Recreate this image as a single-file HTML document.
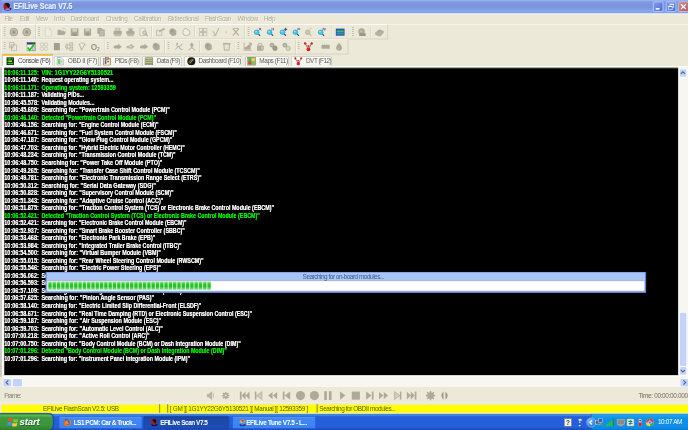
<!DOCTYPE html><html><head><meta charset='utf-8'><title>EFILive Scan V7.5</title><style>
html,body{margin:0;padding:0;background:#ece9d8;overflow:hidden}
body{width:688px;height:430px;position:relative}
#r{filter:blur(0.01px);position:absolute;left:0;top:0;width:1280px;height:800px;transform:scale(0.5375);transform-origin:0 0;background:#ece9d8;font:11px 'Liberation Sans',sans-serif;overflow:hidden;color:#000}
#r div,#r span,#r svg{position:absolute;box-sizing:border-box;white-space:pre}
.t{line-height:14px;height:14px}
#con .l{height:14px;line-height:14px;font:bold 12px 'Liberation Sans',sans-serif;color:#fff;-webkit-text-stroke:0.1px #fff;text-shadow:0 0 1.2px rgba(255,255,255,.7)}
#con .g{color:#00f400;-webkit-text-stroke:0.1px #00f400;text-shadow:0 0 1.2px rgba(0,255,0,.7)}
.mi{top:27.5px;height:14px;line-height:14px;color:#afac9c;font-size:12px;text-shadow:1px 1px 0 #fbfaf4}
.band{border-top:1px solid #fff;border-left:1px solid #fff;border-right:1px solid #c5c2b2;border-bottom:1px solid #c5c2b2}
.grip{width:3px;border-left:2px dotted #b0ad9c;}
.sep{width:2px;border-left:1px solid #c5c2b2;border-right:1px solid #fff}
.tab{top:105px;height:19px;background:linear-gradient(#fdfdfb,#f2f1ea);border:1px solid #919b9c;border-bottom:none;border-radius:3px 3px 0 0}
.tabt{top:106.5px;height:14px;line-height:14px;color:#5e5d58;font-size:12px}
</style></head><body><div id='r'>
<div style="left:0;top:0;width:1280px;height:24.5px;background:linear-gradient(#a3bdf0 0,#86a3e8 2px,#7a96df 6px,#7a96df 14px,#86a8ef 21px,#7d9ce6 24.5px)"></div>
<div style="left:0;top:0;width:3px;height:24.5px;background:#8890e8"></div>
<div style="left:25px;top:3px;height:18px;line-height:18px;font:bold 16px 'Liberation Sans',sans-serif;color:#eef3fc;text-shadow:1px 1px 0 #5f7cc8;-webkit-text-stroke:0.3px #eef3fc;transform:scaleX(0.7995);transform-origin:0 0">EFILive Scan V7.5</div>
<svg style="left:5px;top:4px" width="18" height="18" viewBox="0 0 18 18"><path d="M2 12 Q4 17 9 16 Q14 17 17 12 L14 11 L9 13 L4 11Z" fill="#1c1c8c"/><circle cx="7.5" cy="7" r="6" fill="#b01818"/><path d="M4 3 Q9 0 13 4 Q15 8 11 11 Q8 8 4 3Z" fill="#141420"/><path d="M6 12 L12 12 L14 15 L4 15Z" fill="#e8e8f4" opacity=".55"/></svg>
<div style="left:1215px;top:3px;width:19px;height:19px;border-radius:3px;background:linear-gradient(135deg,#7f9cf0,#4c6fd9);border:1px solid #dfe6fb"></div>
<div style="left:1220px;top:15px;width:7px;height:3px;background:#fff"></div>
<div style="left:1239px;top:3px;width:19px;height:19px;border-radius:3px;background:linear-gradient(135deg,#7f9cf0,#4c6fd9);border:1px solid #dfe6fb"></div>
<div style="left:1246px;top:7px;width:8px;height:7px;border:1px solid #fff;border-top-width:2px"></div>
<div style="left:1243px;top:11px;width:8px;height:7px;border:1px solid #fff;border-top-width:2px;background:#5c7de0"></div>
<div style="left:1262px;top:3px;width:19px;height:19px;border-radius:3px;background:linear-gradient(135deg,#d08c8c,#b5565a);border:1px solid #ecd6da"></div>
<svg style="left:1262px;top:3px" width="19" height="19"><path d="M5 5 L14 14 M14 5 L5 14" stroke="#fff" stroke-width="2.4"/></svg>
<div style="left:0;top:24.5px;width:1280px;height:2.5px;background:#f6f4ea"></div>
<div class="mi" style="left:8.4px;letter-spacing:-1.111px">File</div>
<div class="mi" style="left:37.2px;letter-spacing:-1.122px">Edit</div>
<div class="mi" style="left:66.4px;letter-spacing:-0.949px">View</div>
<div class="mi" style="left:100.5px;letter-spacing:0.121px">Info</div>
<div class="mi" style="left:131.5px;letter-spacing:-0.669px">Dashboard</div>
<div class="mi" style="left:196.7px;letter-spacing:-0.607px">Charting</div>
<div class="mi" style="left:249.3px;letter-spacing:-0.652px">Calibration</div>
<div class="mi" style="left:312.6px;letter-spacing:-0.637px">Bidirectional</div>
<div class="mi" style="left:381.4px;letter-spacing:-0.989px">FlashScan</div>
<div class="mi" style="left:441.9px;letter-spacing:-0.865px">Window</div>
<div class="mi" style="left:490.6px;letter-spacing:-0.822px">Help</div>
<div style="left:0;top:45px;width:1280px;height:1px;background:#fff"></div>
<div class="band" style="left:2.4px;top:45px;width:64.9px;height:28px"></div>
<div class="band" style="left:67.3px;top:45px;width:388.5px;height:28px"></div>
<div class="band" style="left:455.8px;top:45px;width:194.2px;height:28px"></div>
<div class="band" style="left:650.0px;top:45px;width:72.4px;height:28px"></div>
<div class="band" style="left:2.4px;top:73px;width:193.9px;height:28px"></div>
<div class="band" style="left:196.3px;top:73px;width:111.1px;height:28px"></div>
<div class="band" style="left:307.3px;top:73px;width:130.8px;height:28px"></div>
<div class="band" style="left:438.1px;top:73px;width:112.6px;height:28px"></div>
<div class="band" style="left:550.7px;top:73px;width:97.1px;height:28px"></div>
<div style="left:6.5px;top:50px;width:3px;height:17px;background:repeating-linear-gradient(#bfbcab 0,#bfbcab 2px,transparent 2px,transparent 4px)"></div>
<div style="left:70.7px;top:50px;width:3px;height:17px;background:repeating-linear-gradient(#bfbcab 0,#bfbcab 2px,transparent 2px,transparent 4px)"></div>
<div style="left:461.4px;top:50px;width:3px;height:17px;background:repeating-linear-gradient(#bfbcab 0,#bfbcab 2px,transparent 2px,transparent 4px)"></div>
<div style="left:654.7px;top:50px;width:3px;height:17px;background:repeating-linear-gradient(#bfbcab 0,#bfbcab 2px,transparent 2px,transparent 4px)"></div>
<div style="left:6.5px;top:78px;width:3px;height:17px;background:repeating-linear-gradient(#bfbcab 0,#bfbcab 2px,transparent 2px,transparent 4px)"></div>
<div style="left:199.2px;top:78px;width:3px;height:17px;background:repeating-linear-gradient(#bfbcab 0,#bfbcab 2px,transparent 2px,transparent 4px)"></div>
<div style="left:312.2px;top:78px;width:3px;height:17px;background:repeating-linear-gradient(#bfbcab 0,#bfbcab 2px,transparent 2px,transparent 4px)"></div>
<div style="left:442.2px;top:78px;width:3px;height:17px;background:repeating-linear-gradient(#bfbcab 0,#bfbcab 2px,transparent 2px,transparent 4px)"></div>
<div style="left:554.2px;top:78px;width:3px;height:17px;background:repeating-linear-gradient(#bfbcab 0,#bfbcab 2px,transparent 2px,transparent 4px)"></div>
<div style="left:200.7px;top:48px;width:1px;height:21px;background:#c5c2b2"></div><div style="left:201.7px;top:48px;width:1px;height:21px;background:#fff"></div>
<div style="left:282.2px;top:48px;width:1px;height:21px;background:#c5c2b2"></div><div style="left:283.2px;top:48px;width:1px;height:21px;background:#fff"></div>
<div style="left:361.8px;top:48px;width:1px;height:21px;background:#c5c2b2"></div><div style="left:362.8px;top:48px;width:1px;height:21px;background:#fff"></div>
<div style="left:615.7px;top:48px;width:1px;height:21px;background:#c5c2b2"></div><div style="left:616.7px;top:48px;width:1px;height:21px;background:#fff"></div>
<div style="left:689.4px;top:48px;width:1px;height:21px;background:#c5c2b2"></div><div style="left:690.4px;top:48px;width:1px;height:21px;background:#fff"></div>
<div style="left:41.0px;top:76px;width:1px;height:21px;background:#c5c2b2"></div><div style="left:42.0px;top:76px;width:1px;height:21px;background:#fff"></div>
<div style="left:371.1px;top:76px;width:1px;height:21px;background:#c5c2b2"></div><div style="left:372.1px;top:76px;width:1px;height:21px;background:#fff"></div>
<div style="left:588.4px;top:76px;width:1px;height:21px;background:#c5c2b2"></div><div style="left:589.4px;top:76px;width:1px;height:21px;background:#fff"></div>
<svg style="left:16.5px;top:50.5px" width="17.6" height="17.6" viewBox="0 0 16 16"><circle cx="8" cy="8" r="7.3" fill="#adaa9a"/><circle cx="8" cy="8" r="4.6" fill="none" stroke="#d6d3c3" stroke-width="1"/><circle cx="8" cy="8" r="1.8" fill="#9a9787"/></svg>
<svg style="left:40.9px;top:50.5px" width="17.6" height="17.6" viewBox="0 0 16 16"><circle cx="8" cy="8" r="7.3" fill="#adaa9a"/><circle cx="8" cy="8" r="4.6" fill="none" stroke="#d6d3c3" stroke-width="1"/><circle cx="8" cy="8" r="1.8" fill="#9a9787"/></svg>
<svg style="left:81.4px;top:50.5px" width="17.6" height="17.6" viewBox="0 0 16 16"><path d="M3 1 H10 L13 4 V15 H3Z" fill="#f0eee2" stroke="#cbc8b8" stroke-width="1"/><path d="M10 1 V4 H13" fill="none" stroke="#cbc8b8"/></svg>
<svg style="left:105.6px;top:50.5px" width="17.6" height="17.6" viewBox="0 0 16 16"><path d="M1 13 V4 H6 L7 5.5 H12 V7 H15.5 L12.5 13Z" fill="#adaa9a"/><path d="M9 3 Q12 0 14 3" stroke="#adaa9a" fill="none"/></svg>
<svg style="left:129.6px;top:50.5px" width="17.6" height="17.6" viewBox="0 0 16 16"><rect x="1.5" y="1.5" width="13" height="13" fill="#adaa9a"/><rect x="4" y="2" width="8" height="5" fill="#d6d3c3"/><rect x="5" y="10" width="6" height="4.5" fill="#9c9989"/></svg>
<svg style="left:153.6px;top:50.5px" width="17.6" height="17.6" viewBox="0 0 16 16"><rect x="2" y="2" width="12" height="12" fill="#adaa9a"/><rect x="4.5" y="2.5" width="7" height="4" fill="#d6d3c3"/><rect x="5.5" y="9.5" width="5" height="4" fill="#9c9989"/></svg>
<svg style="left:178.7px;top:50.5px" width="17.6" height="17.6" viewBox="0 0 16 16"><rect x="2" y="1" width="8" height="10" fill="#adaa9a"/><rect x="5.5" y="4" width="8.5" height="11" fill="#b4b1a0" stroke="#adaa9a"/><path d="M7 7H12M7 9.5H12M7 12H12" stroke="#d6d3c3"/></svg>
<svg style="left:210.0px;top:50.5px" width="17.6" height="17.6" viewBox="0 0 16 16"><path d="M4 1 H12 V6 H4Z" fill="#d6d3c3" stroke="#adaa9a"/><rect x="1" y="6" width="14" height="6" rx="1" fill="#adaa9a"/><rect x="3.5" y="11" width="9" height="3.5" fill="#c5c2b2" stroke="#adaa9a"/></svg>
<svg style="left:233.8px;top:50.5px" width="17.6" height="17.6" viewBox="0 0 16 16"><path d="M5 1.5 H11 V6 H5Z" fill="#d6d3c3" stroke="#adaa9a"/><rect x="1" y="6" width="14" height="6" rx="2" fill="#adaa9a"/><circle cx="8" cy="5" r="2.5" fill="#adaa9a"/><rect x="3.5" y="11" width="9" height="3.5" fill="#c5c2b2" stroke="#adaa9a"/></svg>
<svg style="left:258.2px;top:50.5px" width="17.6" height="17.6" viewBox="0 0 16 16"><path d="M2 1 H11 V14 H2Z" fill="#eeecdf" stroke="#b0ad9c"/><circle cx="10" cy="9" r="3" fill="#d6d3c3" stroke="#adaa9a" stroke-width="1.6"/><path d="M12 11 L15 14.5" stroke="#adaa9a" stroke-width="2.2"/></svg>
<svg style="left:289.2px;top:50.5px" width="17.6" height="17.6" viewBox="0 0 16 16"><path d="M2 5 H11 V14 H2Z" fill="#e6e3d4" stroke="#adaa9a"/><path d="M6 6 L13 2 L12 0.5 L16 2 L14.5 6 L13.8 4 L7 8Z" fill="#adaa9a"/></svg>
<svg style="left:313.1px;top:50.5px" width="17.6" height="17.6" viewBox="0 0 16 16"><path d="M3 3 Q7 0 11 3 Q15 5 13.5 9 Q15 14 10 13.5 Q6 16 4 12 Q0 9 3 3Z" fill="#adaa9a"/><circle cx="6.5" cy="6" r="1.8" fill="#999686"/></svg>
<svg style="left:338.2px;top:50.5px" width="17.6" height="17.6" viewBox="0 0 16 16"><path d="M5 2 Q8 0 9 3 Q14 4 14 9 Q14 14 8 14 Q2 14 2 9 Q2 5 5 2Z" fill="#efede1" stroke="#aeab9a" stroke-width="1.3"/></svg>
<svg style="left:369.2px;top:50.5px" width="17.6" height="17.6" viewBox="0 0 16 16"><rect x="1.5" y="1.5" width="5.5" height="5.5" fill="none" stroke="#b3b09f"/><rect x="9" y="1.5" width="5.5" height="5.5" fill="none" stroke="#b3b09f"/><rect x="1.5" y="9" width="5.5" height="5.5" fill="none" stroke="#b3b09f"/><rect x="9" y="9" width="5.5" height="5.5" fill="none" stroke="#b3b09f"/><path d="M8 2V14M3 8H13" stroke="#adaa9a"/></svg>
<svg style="left:393.4px;top:50.5px" width="17.6" height="17.6" viewBox="0 0 16 16"><path d="M3 6 L7 14 L13 1" fill="none" stroke="#adaa9a" stroke-width="1.6"/><path d="M2 14 H9" stroke="#bcb9a8"/></svg>
<svg style="left:411.7px;top:50.5px" width="17.6" height="17.6" viewBox="0 0 16 16"><rect x="7" y="7" width="2" height="2" fill="#b5b2a1"/></svg>
<svg style="left:430.3px;top:50.5px" width="17.6" height="17.6" viewBox="0 0 16 16"><path d="M3 2 L13 14 M13 2 L3 14" stroke="#adaa9a" stroke-width="1.7" fill="none"/><path d="M4 1.5 H12" stroke="#adaa9a" stroke-width="1.4"/></svg>
<svg style="left:624.1px;top:50.5px" width="17.6" height="17.6" viewBox="0 0 16 16"><rect x="0.5" y="2" width="15" height="12" fill="#2a50b8"/><rect x="2" y="5" width="12" height="3" fill="#38b86a"/><rect x="2" y="8.5" width="12" height="3.5" fill="#2f9a9a"/></svg>
<svg style="left:664.5px;top:50.5px" width="17.6" height="17.6" viewBox="0 0 16 16"><circle cx="7" cy="7" r="5.5" fill="#adaa9a"/><rect x="3" y="10" width="11" height="4.5" rx="1" fill="#98958a"/><circle cx="6.5" cy="6.5" r="2.2" fill="#bdbaa9"/></svg>
<svg style="left:697.2px;top:50.5px" width="17.6" height="17.6" viewBox="0 0 16 16"><path d="M1 9 L8 3 L15 6 L9 13Z" fill="#adaa9a"/><path d="M1 9 L1.5 12 L9.5 15.5 L15 8.5 L15 6" fill="#b6b3a3" stroke="#adaa9a"/></svg>
<svg style="left:470.5px;top:51.3px" width="16" height="16" viewBox="0 0 16 16"><circle cx="6.5" cy="9" r="4.4" fill="#2fd0ee" stroke="#2f86c4" stroke-width="1"/><path d="M10 12.5 L13 15.5" stroke="#2a4488" stroke-width="2.2"/><circle cx="5.5" cy="8" r="1.5" fill="#b8f2fb"/><path d="M10.5 1 L15 5.5 M15 1 L10.5 5.5" stroke="#3a3a7a" stroke-width="1.3"/></svg>
<svg style="left:494.7px;top:51.3px" width="16" height="16" viewBox="0 0 16 16"><circle cx="6.5" cy="9" r="4.4" fill="#2fd0ee" stroke="#2f86c4" stroke-width="1"/><path d="M10 12.5 L13 15.5" stroke="#2a4488" stroke-width="2.2"/><circle cx="5.5" cy="8" r="1.5" fill="#b8f2fb"/><path d="M11 1 V5.5 M14 1 V5.5" stroke="#3a3a7a" stroke-width="1.2"/></svg>
<svg style="left:518.7px;top:51.3px" width="16" height="16" viewBox="0 0 16 16"><circle cx="6.5" cy="9" r="4.4" fill="#2fd0ee" stroke="#2f86c4" stroke-width="1"/><path d="M10 12.5 L13 15.5" stroke="#2a4488" stroke-width="2.2"/><circle cx="5.5" cy="8" r="1.5" fill="#b8f2fb"/><path d="M12.5 0.5 V6.5 M9.5 3.5 H15.5" stroke="#3a3a7a" stroke-width="1.8"/></svg>
<svg style="left:543.1px;top:51.3px" width="16" height="16" viewBox="0 0 16 16"><circle cx="6.5" cy="9" r="4.4" fill="#2fd0ee" stroke="#2f86c4" stroke-width="1"/><path d="M10 12.5 L13 15.5" stroke="#2a4488" stroke-width="2.2"/><circle cx="5.5" cy="8" r="1.5" fill="#b8f2fb"/><path d="M10 3 H16" stroke="#3a3a7a" stroke-width="2"/></svg>
<svg style="left:566.0px;top:51.3px" width="16" height="16" viewBox="0 0 16 16"><circle cx="6.5" cy="9" r="4.4" fill="#c9c6b6" stroke="#aaa796" stroke-width="1"/><path d="M10 12.5 L13 15.5" stroke="#b3b09f" stroke-width="2.2"/><path d="M11 1 H15 M11 1 V5" stroke="#b5b2a1" stroke-width="1"/></svg>
<svg style="left:589.8px;top:51.3px" width="16" height="16" viewBox="0 0 16 16"><circle cx="6.5" cy="9" r="4.4" fill="#2fd0ee" stroke="#2f86c4" stroke-width="1"/><path d="M10 12.5 L13 15.5" stroke="#2a4488" stroke-width="2.2"/><circle cx="5.5" cy="8" r="1.5" fill="#b8f2fb"/><path d="M10 5.5 L11.5 1 L13 5.5 M14 1 V5.5 M15.5 1 V5.5" stroke="#3a3a7a" stroke-width="0.9" fill="none"/></svg>
<svg style="left:14.5px;top:78.2px" width="17.6" height="17.6" viewBox="0 0 16 16"><rect x="2" y="1" width="8" height="9" fill="#e9e6d7" stroke="#adaa9a"/><rect x="6" y="5" width="8" height="10" fill="#e9e6d7" stroke="#adaa9a"/><path d="M4 6 L7 11 L11 3" stroke="#adaa9a" stroke-width="1.4" fill="none"/></svg>
<svg style="left:49.4px;top:78.2px" width="17.6" height="17.6" viewBox="0 0 16 16"><rect x="1" y="1" width="14" height="14" fill="#f4f4f4" stroke="#7a7a8a"/><rect x="1" y="1" width="14" height="3.4" fill="#3c3c5c"/><rect x="10.5" y="7" width="4" height="7.5" fill="#d0d0d0" stroke="#8a8a9a" stroke-width=".8"/><path d="M2.5 9.5 L5.5 14 L13.5 3.5" stroke="#18c818" stroke-width="3" fill="none"/></svg>
<svg style="left:72.7px;top:78.2px" width="17.6" height="17.6" viewBox="0 0 16 16"><circle cx="4.5" cy="4.5" r="3" fill="none" stroke="#c9c6b6" stroke-width="1.3"/><circle cx="11.5" cy="4.5" r="3" fill="none" stroke="#c9c6b6" stroke-width="1.3"/><circle cx="4.5" cy="11.5" r="3" fill="none" stroke="#c9c6b6" stroke-width="1.3"/><circle cx="11.5" cy="11.5" r="3" fill="none" stroke="#c9c6b6" stroke-width="1.3"/></svg>
<svg style="left:97.1px;top:78.2px" width="17.6" height="17.6" viewBox="0 0 16 16"><rect x="3" y="2" width="10" height="12" fill="#9a9788"/><path d="M3 5.5H13M3 9H13M3 12H13" stroke="#b5b2a2"/></svg>
<svg style="left:120.3px;top:78.2px" width="17.6" height="17.6" viewBox="0 0 16 16"><path d="M4 2 V14 M4 5 H10 M4 11 H10" stroke="#adaa9a" fill="none"/><rect x="9" y="1.5" width="5" height="5.5" fill="#dad7c8" stroke="#adaa9a"/><rect x="9" y="9" width="5" height="5.5" fill="#dad7c8" stroke="#adaa9a"/><rect x="1.5" y="5" width="4" height="5" fill="#dad7c8" stroke="#b8b5a5"/></svg>
<svg style="left:143.6px;top:78.2px" width="17.6" height="17.6" viewBox="0 0 16 16"><path d="M3 3 L7 14 L13 3" fill="none" stroke="#adaa9a" stroke-width="1.5"/><path d="M5 2 L11 2 L14 6" fill="none" stroke="#b8b5a5" stroke-width="1.3"/></svg>
<svg style="left:169.2px;top:78.2px" width="17.6" height="17.6" viewBox="0 0 16 16"><text x="0" y="13" font-family="Liberation Sans" font-weight="bold" font-size="14" fill="#999686">O</text><text x="10.5" y="15.5" font-family="Liberation Sans" font-weight="bold" font-size="8" fill="#999686">2</text></svg>
<svg style="left:210.0px;top:78.2px" width="17.6" height="17.6" viewBox="0 0 16 16"><g transform="translate(16,0) scale(-1,1)"><path d="M1 8 L7 3 V5.5 H11 Q15 6 15 9 Q14 11.5 11 11 H7 V13Z" fill="#adaa9a"/></g></svg>
<svg style="left:233.8px;top:78.2px" width="17.6" height="17.6" viewBox="0 0 16 16"><g transform="translate(16,0) scale(-1,1)"><path d="M1 8 L7 3.5 L10 6 Q15 6 15 9 Q13 12 9 10.5 L7 12.5Z" fill="#b7b4a3"/><path d="M5 8 L8 6 L11 8 L8 10Z" fill="#d6d3c3"/></g></svg>
<svg style="left:258.7px;top:78.2px" width="17.6" height="17.6" viewBox="0 0 16 16"><g transform="translate(16,0) scale(-1,1)"><path d="M1 8 L7 3 V5.5 H11 Q15 6 15 9 Q14 11.5 11 11 H7 V13Z" fill="#adaa9a"/></g></svg>
<svg style="left:282.4px;top:78.2px" width="17.6" height="17.6" viewBox="0 0 16 16"><path d="M3 3 Q7 0 11 3 Q15 5 13.5 9 Q15 14 10 13.5 Q6 16 4 12 Q0 9 3 3Z" fill="#adaa9a"/><circle cx="6.5" cy="6" r="1.8" fill="#999686"/></svg>
<svg style="left:323.5px;top:78.2px" width="17.6" height="17.6" viewBox="0 0 16 16"><path d="M2 13 L6 8 L4 5 M6 8 L11 7 L14 3 M8 8 L10 12 L14 13" fill="none" stroke="#adaa9a" stroke-width="1.6"/><circle cx="5" cy="3" r="1.6" fill="#adaa9a"/></svg>
<svg style="left:347.7px;top:78.2px" width="17.6" height="17.6" viewBox="0 0 16 16"><path d="M8 1 L12 6 H9.5 V10 H6.5 V6 H4Z" fill="#adaa9a"/><path d="M2 14 L8 10 L14 14" fill="none" stroke="#adaa9a" stroke-width="1.5"/></svg>
<svg style="left:379.1px;top:78.2px" width="17.6" height="17.6" viewBox="0 0 16 16"><path d="M3 3 Q7 0 11 3 Q15 5 13.5 9 Q15 14 10 13.5 Q6 16 4 12 Q0 9 3 3Z" fill="#adaa9a"/><circle cx="6.5" cy="6" r="1.8" fill="#999686"/></svg>
<svg style="left:413.2px;top:78.2px" width="17.6" height="17.6" viewBox="0 0 16 16"><path d="M3 3 H13 L12 14 H4Z" fill="#e4e1d2" stroke="#adaa9a" stroke-width="1.4"/><path d="M1.5 3 H14.5" stroke="#adaa9a" stroke-width="1.8"/></svg>
<svg style="left:452.0px;top:78.2px" width="17.6" height="17.6" viewBox="0 0 16 16"><path d="M2 1 V14 H15" fill="none" stroke="#adaa9a" stroke-width="1.4"/><path d="M3 13 L3 9 Q7 8 9 5 L13 3 V13Z" fill="#adaa9a"/><path d="M10 2 H14 V6" fill="none" stroke="#8f8c7c" stroke-width="1.3"/></svg>
<svg style="left:475.3px;top:78.2px" width="17.6" height="17.6" viewBox="0 0 16 16"><rect x="3" y="6" width="10" height="9" fill="#adaa9a"/><path d="M5 6 V3.5 Q8 0.5 11 3.5 V6" fill="none" stroke="#adaa9a" stroke-width="1.5"/><rect x="9" y="8" width="5" height="5" fill="#c7c4b4" stroke="#adaa9a"/></svg>
<svg style="left:500.2px;top:78.2px" width="17.6" height="17.6" viewBox="0 0 16 16"><circle cx="5.5" cy="5.5" r="4" fill="#adaa9a"/><circle cx="10.5" cy="10.5" r="4.3" fill="#99968a"/><circle cx="5.5" cy="5.5" r="1.3" fill="#d6d3c3"/></svg>
<svg style="left:524.2px;top:78.2px" width="17.6" height="17.6" viewBox="0 0 16 16"><circle cx="5.5" cy="5.5" r="4" fill="#adaa9a"/><circle cx="11" cy="11" r="3.6" fill="#d8d5c6" stroke="#adaa9a" stroke-width="1.3"/><circle cx="5.5" cy="5.5" r="1.3" fill="#d6d3c3"/></svg>
<svg style="left:565.0px;top:78.2px" width="17.6" height="17.6" viewBox="0 0 16 16"><path d="M2.5 2.5 L8 13 L13.5 2.5" fill="none" stroke="#555" stroke-width="1.2"/><circle cx="2.5" cy="2.5" r="2" fill="#c02020"/><circle cx="13.5" cy="2.5" r="2" fill="#c02020"/><circle cx="8" cy="7" r="1.8" fill="#e03030"/><circle cx="8" cy="12.5" r="3.2" fill="#e81c1c"/></svg>
<svg style="left:597.0px;top:78.2px" width="17.6" height="17.6" viewBox="0 0 16 16"><rect x="1" y="5" width="14" height="6.5" rx="1" fill="#adaa9a"/><path d="M3 5V3M6 5V3M9 5V3M12 5V3" stroke="#b3b09f"/></svg>
<svg style="left:621.9px;top:78.2px" width="17.6" height="17.6" viewBox="0 0 16 16"><path d="M8 1.5 Q13.5 8 13 11 Q12 15 8 15 Q4 15 3 11 Q2.5 8 8 1.5Z" fill="#adaa9a"/><path d="M6 10 Q6 12.5 8 13" stroke="#d6d3c3" fill="none"/></svg>
<div style="left:3.7px;top:101px;width:95.3px;height:24px;background:#fdfdfb;border:1px solid #919b9c;border-bottom:none;border-radius:3px 3px 0 0"></div>
<div style="left:3.7px;top:100.5px;width:95.3px;height:3px;background:#ffc73c;border-top:1px solid #e68b2c;border-radius:3px 3px 0 0"></div>
<div class="tabt" style="left:33.5px;color:#45443f;letter-spacing:-0.788px">Console (F6)</div>
<div class="tab" style="left:100.1px;width:83.5px"></div>
<div class="tabt" style="left:126.0px;letter-spacing:-0.621px">OBD II (F7)</div>
<div class="tab" style="left:186.0px;width:74.6px"></div>
<div class="tabt" style="left:213.4px;letter-spacing:-0.806px">PIDs (F8)</div>
<div class="tab" style="left:264.4px;width:74.0px"></div>
<div class="tabt" style="left:291.7px;letter-spacing:-0.857px">Data (F9)</div>
<div class="tab" style="left:341.6px;width:109.8px"></div>
<div class="tabt" style="left:369.5px;letter-spacing:-0.801px">Dashboard (F10)</div>
<div class="tab" style="left:455.8px;width:81.9px"></div>
<div class="tabt" style="left:482.4px;letter-spacing:-0.763px">Maps (F11)</div>
<div class="tab" style="left:541.4px;width:77.0px"></div>
<div class="tabt" style="left:569.3px;letter-spacing:-0.990px">DVT (F12)</div>
<svg style="left:11.2px;top:105.5px" width="16" height="16" viewBox="0 0 16 16"><rect x="1.2" y="0.8" width="13.6" height="14.4" fill="#0a1c0a"/><rect x="3" y="2.5" width="7" height="2.6" fill="#20d020"/><rect x="11" y="2.5" width="2.4" height="2.6" fill="#189818"/><rect x="4.5" y="6.4" width="7" height="3" fill="#c8d820"/><rect x="2.6" y="6.4" width="1.6" height="3" fill="#20c020"/><rect x="3" y="10.8" width="10.4" height="2.8" fill="#20c820"/></svg>
<svg style="left:103.6px;top:105.5px" width="16" height="16" viewBox="0 0 16 16"><path d="M2.5 1 H10 L13.5 4.5 V15 H2.5Z" fill="#f6f6f2" stroke="#8a8a8a"/><rect x="4" y="4" width="4.5" height="9" fill="#58d868"/><path d="M9.5 6H12M9.5 8.5H12M9.5 11H12" stroke="#9a9a9a"/></svg>
<svg style="left:191.1px;top:105.5px" width="16" height="16" viewBox="0 0 16 16"><rect x="1" y="3" width="14" height="12.5" fill="#d6b67a" stroke="#9a7840"/><rect x="3" y="5" width="10" height="9" fill="#f4f0e0"/><rect x="5" y="0.8" width="6" height="4" fill="#b0a080" stroke="#706040" stroke-width=".8"/><rect x="4" y="6" width="3" height="7" fill="#4868c0"/><rect x="8.5" y="7" width="3" height="3" fill="#c84040"/></svg>
<svg style="left:269.4px;top:105.5px" width="16" height="16" viewBox="0 0 16 16"><rect x="0.5" y="1.5" width="15" height="13" fill="#c6c69a" stroke="#6a6a48"/><path d="M1 5H15M1 8.5H15M1 12H15" stroke="#7a7a56" stroke-width="1.3"/></svg>
<svg style="left:347.5px;top:105.5px" width="16" height="16" viewBox="0 0 16 16"><circle cx="8" cy="8" r="7.5" fill="#181818"/><path d="M3 10 Q8 2 13 6" stroke="#e03030" stroke-width="2" fill="none"/><path d="M5 12 L11 5" stroke="#30d840" stroke-width="2"/></svg>
<svg style="left:460.1px;top:105.5px" width="16" height="16" viewBox="0 0 16 16"><rect x="0.5" y="0.5" width="15" height="15" fill="#b0a890" stroke="#6a6a5a"/><rect x="2" y="2" width="6" height="6" fill="#48b848"/><rect x="8" y="2" width="6" height="6" fill="#e8d848"/><rect x="2" y="8" width="6" height="6" fill="#d84838"/><rect x="8" y="8" width="6" height="6" fill="#78c848"/></svg>
<svg style="left:546.8px;top:105.5px" width="16" height="16" viewBox="0 0 16 16"><path d="M2.5 2.5 L8 13 L13.5 2.5" fill="none" stroke="#555" stroke-width="1.2"/><circle cx="2.5" cy="2.5" r="2" fill="#c02020"/><circle cx="13.5" cy="2.5" r="2" fill="#c02020"/><circle cx="8" cy="7" r="1.8" fill="#e03030"/><circle cx="8" cy="12.5" r="3.2" fill="#e81c1c"/></svg>
<div style="left:0;top:123px;width:1280px;height:2.5px;background:#fff"></div>
<div style="left:7.5px;top:125.5px;width:1254.5px;height:1px;background:#808080"></div>
<div style="left:0;top:125px;width:3.6px;height:576px;background:#cbcac6"></div><div style="left:3.6px;top:125px;width:3.9px;height:576px;background:#fdfdfd"></div>
<div style="left:7.5px;top:126px;width:1254.5px;height:1px;background:#404040"></div>
<div id="con" style="left:7.5px;top:127px;width:1254.5px;height:571px;background:#000;overflow:hidden">
<div class="l g" style="top:0.7px;left:0.3px;transform:scaleX(0.8589);transform-origin:0 0">10:06:11.125:</div>
<div class="l g" style="top:0.7px;left:69.3px;transform:scaleX(0.8911);transform-origin:0 0">VIN: 1G1YY22G6Y5130521</div>
<div class="l" style="top:14.7px;left:0.3px;transform:scaleX(0.8589);transform-origin:0 0">10:06:11.140:</div>
<div class="l" style="top:14.7px;left:69.3px;transform:scaleX(0.8393);transform-origin:0 0">Request operating system...</div>
<div class="l g" style="top:28.7px;left:0.3px;transform:scaleX(0.8589);transform-origin:0 0">10:06:11.171:</div>
<div class="l g" style="top:28.7px;left:69.3px;transform:scaleX(0.8539);transform-origin:0 0">Operating system: 12593359</div>
<div class="l" style="top:42.7px;left:0.3px;transform:scaleX(0.8589);transform-origin:0 0">10:06:11.187:</div>
<div class="l" style="top:42.7px;left:69.3px;transform:scaleX(0.8196);transform-origin:0 0">Validating PIDs...</div>
<div class="l" style="top:56.7px;left:0.3px;transform:scaleX(0.8514);transform-origin:0 0">10:06:45.578:</div>
<div class="l" style="top:56.7px;left:69.3px;transform:scaleX(0.8324);transform-origin:0 0">Validating Modules...</div>
<div class="l" style="top:70.7px;left:0.3px;transform:scaleX(0.8514);transform-origin:0 0">10:06:45.609:</div>
<div class="l" style="top:70.7px;left:69.3px;transform:scaleX(0.8312);transform-origin:0 0">Searching for: &quot;Powertrain Control Module (PCM)&quot;</div>
<div class="l g" style="top:84.7px;left:0.3px;transform:scaleX(0.8514);transform-origin:0 0">10:06:46.140:</div>
<div class="l g" style="top:84.7px;left:69.3px;transform:scaleX(0.8305);transform-origin:0 0">Detected &quot;Powertrain Control Module (PCM)&quot;</div>
<div class="l" style="top:98.7px;left:0.3px;transform:scaleX(0.8514);transform-origin:0 0">10:06:46.156:</div>
<div class="l" style="top:98.7px;left:69.3px;transform:scaleX(0.8210);transform-origin:0 0">Searching for: &quot;Engine Control Module (ECM)&quot;</div>
<div class="l" style="top:112.7px;left:0.3px;transform:scaleX(0.8514);transform-origin:0 0">10:06:46.671:</div>
<div class="l" style="top:112.7px;left:69.3px;transform:scaleX(0.8303);transform-origin:0 0">Searching for: &quot;Fuel System Control Module (FSCM)&quot;</div>
<div class="l" style="top:126.7px;left:0.3px;transform:scaleX(0.8514);transform-origin:0 0">10:06:47.187:</div>
<div class="l" style="top:126.7px;left:69.3px;transform:scaleX(0.8301);transform-origin:0 0">Searching for: &quot;Glow Plug Control Module (GPCM)&quot;</div>
<div class="l" style="top:140.7px;left:0.3px;transform:scaleX(0.8514);transform-origin:0 0">10:06:47.703:</div>
<div class="l" style="top:140.7px;left:69.3px;transform:scaleX(0.8221);transform-origin:0 0">Searching for: &quot;Hybrid Electric Motor Controller (HEMC)&quot;</div>
<div class="l" style="top:154.7px;left:0.3px;transform:scaleX(0.8514);transform-origin:0 0">10:06:48.234:</div>
<div class="l" style="top:154.7px;left:69.3px;transform:scaleX(0.8266);transform-origin:0 0">Searching for: &quot;Transmission Control Module (TCM)&quot;</div>
<div class="l" style="top:168.7px;left:0.3px;transform:scaleX(0.8514);transform-origin:0 0">10:06:48.750:</div>
<div class="l" style="top:168.7px;left:69.3px;transform:scaleX(0.8546);transform-origin:0 0">Searching for: &quot;Power Take Off Module (PTO)&quot;</div>
<div class="l" style="top:182.7px;left:0.3px;transform:scaleX(0.8514);transform-origin:0 0">10:06:49.265:</div>
<div class="l" style="top:182.7px;left:69.3px;transform:scaleX(0.8407);transform-origin:0 0">Searching for: &quot;Transfer Case Shift Control Module (TCSCM)&quot;</div>
<div class="l" style="top:196.7px;left:0.3px;transform:scaleX(0.8514);transform-origin:0 0">10:06:49.781:</div>
<div class="l" style="top:196.7px;left:69.3px;transform:scaleX(0.8358);transform-origin:0 0">Searching for: &quot;Electronic Transmission Range Select (ETRS)&quot;</div>
<div class="l" style="top:210.7px;left:0.3px;transform:scaleX(0.8514);transform-origin:0 0">10:06:50.312:</div>
<div class="l" style="top:210.7px;left:69.3px;transform:scaleX(0.8593);transform-origin:0 0">Searching for: &quot;Serial Data Gateway (SDG)&quot;</div>
<div class="l" style="top:224.7px;left:0.3px;transform:scaleX(0.8514);transform-origin:0 0">10:06:50.828:</div>
<div class="l" style="top:224.7px;left:69.3px;transform:scaleX(0.8345);transform-origin:0 0">Searching for: &quot;Supervisory Control Module (SCM)&quot;</div>
<div class="l" style="top:238.7px;left:0.3px;transform:scaleX(0.8514);transform-origin:0 0">10:06:51.343:</div>
<div class="l" style="top:238.7px;left:69.3px;transform:scaleX(0.8377);transform-origin:0 0">Searching for: &quot;Adaptive Cruise Control (ACC)&quot;</div>
<div class="l" style="top:252.7px;left:0.3px;transform:scaleX(0.8514);transform-origin:0 0">10:06:51.875:</div>
<div class="l" style="top:252.7px;left:69.3px;transform:scaleX(0.8299);transform-origin:0 0">Searching for: &quot;Traction Control System (TCS) or Electronic Brake Control Module (EBCM)&quot;</div>
<div class="l g" style="top:266.7px;left:0.3px;transform:scaleX(0.8514);transform-origin:0 0">10:06:52.421:</div>
<div class="l g" style="top:266.7px;left:69.3px;transform:scaleX(0.8283);transform-origin:0 0">Detected &quot;Traction Control System (TCS) or Electronic Brake Control Module (EBCM)&quot;</div>
<div class="l" style="top:280.7px;left:0.3px;transform:scaleX(0.8514);transform-origin:0 0">10:06:52.421:</div>
<div class="l" style="top:280.7px;left:69.3px;transform:scaleX(0.8217);transform-origin:0 0">Searching for: &quot;Electronic Brake Control Module (EBCM)&quot;</div>
<div class="l" style="top:294.7px;left:0.3px;transform:scaleX(0.8514);transform-origin:0 0">10:06:52.937:</div>
<div class="l" style="top:294.7px;left:69.3px;transform:scaleX(0.8306);transform-origin:0 0">Searching for: &quot;Smart Brake Booster Controller (SBBC)&quot;</div>
<div class="l" style="top:308.7px;left:0.3px;transform:scaleX(0.8514);transform-origin:0 0">10:06:53.468:</div>
<div class="l" style="top:308.7px;left:69.3px;transform:scaleX(0.8266);transform-origin:0 0">Searching for: &quot;Electronic Park Brake (EPB)&quot;</div>
<div class="l" style="top:322.7px;left:0.3px;transform:scaleX(0.8514);transform-origin:0 0">10:06:53.984:</div>
<div class="l" style="top:322.7px;left:69.3px;transform:scaleX(0.8269);transform-origin:0 0">Searching for: &quot;Integrated Trailer Brake Control (ITBC)&quot;</div>
<div class="l" style="top:336.7px;left:0.3px;transform:scaleX(0.8514);transform-origin:0 0">10:06:54.500:</div>
<div class="l" style="top:336.7px;left:69.3px;transform:scaleX(0.8377);transform-origin:0 0">Searching for: &quot;Virtual Bumper Module (VBM)&quot;</div>
<div class="l" style="top:350.7px;left:0.3px;transform:scaleX(0.8514);transform-origin:0 0">10:06:55.015:</div>
<div class="l" style="top:350.7px;left:69.3px;transform:scaleX(0.8344);transform-origin:0 0">Searching for: &quot;Rear Wheel Steering Control Module (RWSCM)&quot;</div>
<div class="l" style="top:364.7px;left:0.3px;transform:scaleX(0.8514);transform-origin:0 0">10:06:55.546:</div>
<div class="l" style="top:364.7px;left:69.3px;transform:scaleX(0.8375);transform-origin:0 0">Searching for: &quot;Electric Power Steering (EPS)&quot;</div>
<div class="l" style="top:378.7px;left:0.3px;transform:scaleX(0.8514);transform-origin:0 0">10:06:56.062:</div>
<div class="l" style="top:378.7px;left:69.3px;transform:scaleX(0.8200);transform-origin:0 0">Searching for: &quot;Electro-Hydraulic Power Steering (EHPS)&quot;</div>
<div class="l" style="top:392.7px;left:0.3px;transform:scaleX(0.8514);transform-origin:0 0">10:06:56.593:</div>
<div class="l" style="top:392.7px;left:69.3px;transform:scaleX(0.8200);transform-origin:0 0">Searching for: &quot;Steering Column Lock Module (SCLM)&quot;</div>
<div class="l" style="top:406.7px;left:0.3px;transform:scaleX(0.8514);transform-origin:0 0">10:06:57.109:</div>
<div class="l" style="top:406.7px;left:69.3px;transform:scaleX(0.8200);transform-origin:0 0">Searching for: &quot;Steering Wheel Position Sensor (SWPS)&quot;</div>
<div class="l" style="top:420.7px;left:0.3px;transform:scaleX(0.8514);transform-origin:0 0">10:06:57.625:</div>
<div class="l" style="top:420.7px;left:69.3px;transform:scaleX(0.8452);transform-origin:0 0">Searching for: &quot;Pinion Angle Sensor (PAS)&quot;</div>
<div class="l" style="top:434.7px;left:0.3px;transform:scaleX(0.8514);transform-origin:0 0">10:06:58.140:</div>
<div class="l" style="top:434.7px;left:69.3px;transform:scaleX(0.8216);transform-origin:0 0">Searching for: &quot;Electric Limited Slip Differential-Front (ELSDF)&quot;</div>
<div class="l" style="top:448.7px;left:0.3px;transform:scaleX(0.8514);transform-origin:0 0">10:06:58.671:</div>
<div class="l" style="top:448.7px;left:69.3px;transform:scaleX(0.8280);transform-origin:0 0">Searching for: &quot;Real Time Damping (RTD) or Electronic Suspension Control (ESC)&quot;</div>
<div class="l" style="top:462.7px;left:0.3px;transform:scaleX(0.8514);transform-origin:0 0">10:06:59.187:</div>
<div class="l" style="top:462.7px;left:69.3px;transform:scaleX(0.8398);transform-origin:0 0">Searching for: &quot;Air Suspension Module (ESC)&quot;</div>
<div class="l" style="top:476.7px;left:0.3px;transform:scaleX(0.8514);transform-origin:0 0">10:06:59.703:</div>
<div class="l" style="top:476.7px;left:69.3px;transform:scaleX(0.8349);transform-origin:0 0">Searching for: &quot;Automatic Level Control (ALC)&quot;</div>
<div class="l" style="top:490.7px;left:0.3px;transform:scaleX(0.8514);transform-origin:0 0">10:07:00.218:</div>
<div class="l" style="top:490.7px;left:69.3px;transform:scaleX(0.8339);transform-origin:0 0">Searching for: &quot;Active Roll Control (ARC)&quot;</div>
<div class="l" style="top:504.7px;left:0.3px;transform:scaleX(0.8514);transform-origin:0 0">10:07:00.750:</div>
<div class="l" style="top:504.7px;left:69.3px;transform:scaleX(0.8276);transform-origin:0 0">Searching for: &quot;Body Control Module (BCM) or Dash Integration Module (DIM)&quot;</div>
<div class="l g" style="top:518.7px;left:0.3px;transform:scaleX(0.8514);transform-origin:0 0">10:07:01.296:</div>
<div class="l g" style="top:518.7px;left:69.3px;transform:scaleX(0.8269);transform-origin:0 0">Detected &quot;Body Control Module (BCM) or Dash Integration Module (DIM)&quot;</div>
<div class="l" style="top:532.7px;left:0.3px;transform:scaleX(0.8514);transform-origin:0 0">10:07:01.296:</div>
<div class="l" style="top:532.7px;left:69.3px;transform:scaleX(0.8210);transform-origin:0 0">Searching for: &quot;Instrument Panel Integration Module (IPM)&quot;</div>
</div>
<div style="left:1262px;top:125px;width:18px;height:575px;background:#f7f6f1"></div>
<div style="left:1264.5px;top:128.5px;width:12.0px;height:14.0px;background:#c3d3fd;border-radius:2px;box-shadow:0 0 0 1px #fff"></div>
<svg style="left:1262px;top:127px" width="17" height="17"><path d="M4.5 10.5 L8.5 6.5 L12.5 10.5" stroke="#4d6185" stroke-width="2" fill="none"/></svg>
<div style="left:1264.5px;top:582px;width:12.0px;height:99px;background:#c3d3fd;border-radius:2px;box-shadow:0 0 0 1px #fff"></div>
<div style="left:1264.5px;top:683px;width:12.0px;height:14px;background:#c3d3fd;border-radius:2px;box-shadow:0 0 0 1px #fff"></div>
<svg style="left:1262px;top:682px" width="17" height="17"><path d="M4.5 6 L8.5 10 L12.5 6" stroke="#4d6185" stroke-width="2" fill="none"/></svg>
<div style="left:4px;top:698px;width:1258px;height:1px;background:#d4d0c8"></div><div style="left:4px;top:699px;width:1276px;height:2px;background:#fff"></div>
<div style="left:5px;top:701px;width:1275px;height:19px;background:#f7f6f1"></div>
<div style="left:6px;top:704.5px;width:15px;height:14.0px;background:#c3d3fd;border-radius:2px;box-shadow:0 0 0 1px #fff"></div>
<svg style="left:5px;top:703px" width="17" height="17"><path d="M10.5 4.5 L6.5 8.5 L10.5 12.5" stroke="#4d6185" stroke-width="2" fill="none"/></svg>
<div style="left:24px;top:704.5px;width:17px;height:14.0px;background:#c3d3fd;border-radius:2px;box-shadow:0 0 0 1px #fff"></div>
<div style="left:1266px;top:704.5px;width:15px;height:14.0px;background:#c3d3fd;border-radius:2px;box-shadow:0 0 0 1px #fff"></div>
<svg style="left:1265px;top:703px" width="17" height="17"><path d="M6.5 4.5 L10.5 8.5 L6.5 12.5" stroke="#4d6185" stroke-width="2" fill="none"/></svg>
<div style="left:84.5px;top:505.5px;width:1117.0px;height:39.200000000000045px;background:#6d8fdc;border:1px solid #5a7ccc"></div>
<div style="left:86.5px;top:506.5px;width:1113.0px;height:15px;background:#a7c6f5"></div>
<div style="left:86.5px;top:521.5px;width:1113.0px;height:20px;background:#fff;border:1px solid #8aa0c8"></div>

<div style="left:563px;top:507.5px;height:14px;line-height:14px;font-size:12px;color:#3f5a8c;letter-spacing:-0.922px">Searching for on-board modules...</div>
<div style="left:89.5px;top:524.0px;width:302px;height:15px;background:#cdf1cd"></div><div style="left:89.5px;top:524.0px;width:6px;height:15px;background:linear-gradient(#8be28b,#22c022 40%,#22c022 60%,#8be28b)"></div><div style="left:97.5px;top:524.0px;width:6px;height:15px;background:linear-gradient(#8be28b,#22c022 40%,#22c022 60%,#8be28b)"></div><div style="left:105.5px;top:524.0px;width:6px;height:15px;background:linear-gradient(#8be28b,#22c022 40%,#22c022 60%,#8be28b)"></div><div style="left:113.5px;top:524.0px;width:6px;height:15px;background:linear-gradient(#8be28b,#22c022 40%,#22c022 60%,#8be28b)"></div><div style="left:121.5px;top:524.0px;width:6px;height:15px;background:linear-gradient(#8be28b,#22c022 40%,#22c022 60%,#8be28b)"></div><div style="left:129.5px;top:524.0px;width:6px;height:15px;background:linear-gradient(#8be28b,#22c022 40%,#22c022 60%,#8be28b)"></div><div style="left:137.5px;top:524.0px;width:6px;height:15px;background:linear-gradient(#8be28b,#22c022 40%,#22c022 60%,#8be28b)"></div><div style="left:145.5px;top:524.0px;width:6px;height:15px;background:linear-gradient(#8be28b,#22c022 40%,#22c022 60%,#8be28b)"></div><div style="left:153.5px;top:524.0px;width:6px;height:15px;background:linear-gradient(#8be28b,#22c022 40%,#22c022 60%,#8be28b)"></div><div style="left:161.5px;top:524.0px;width:6px;height:15px;background:linear-gradient(#8be28b,#22c022 40%,#22c022 60%,#8be28b)"></div><div style="left:169.5px;top:524.0px;width:6px;height:15px;background:linear-gradient(#8be28b,#22c022 40%,#22c022 60%,#8be28b)"></div><div style="left:177.5px;top:524.0px;width:6px;height:15px;background:linear-gradient(#8be28b,#22c022 40%,#22c022 60%,#8be28b)"></div><div style="left:185.5px;top:524.0px;width:6px;height:15px;background:linear-gradient(#8be28b,#22c022 40%,#22c022 60%,#8be28b)"></div><div style="left:193.5px;top:524.0px;width:6px;height:15px;background:linear-gradient(#8be28b,#22c022 40%,#22c022 60%,#8be28b)"></div><div style="left:201.5px;top:524.0px;width:6px;height:15px;background:linear-gradient(#8be28b,#22c022 40%,#22c022 60%,#8be28b)"></div><div style="left:209.5px;top:524.0px;width:6px;height:15px;background:linear-gradient(#8be28b,#22c022 40%,#22c022 60%,#8be28b)"></div><div style="left:217.5px;top:524.0px;width:6px;height:15px;background:linear-gradient(#8be28b,#22c022 40%,#22c022 60%,#8be28b)"></div><div style="left:225.5px;top:524.0px;width:6px;height:15px;background:linear-gradient(#8be28b,#22c022 40%,#22c022 60%,#8be28b)"></div><div style="left:233.5px;top:524.0px;width:6px;height:15px;background:linear-gradient(#8be28b,#22c022 40%,#22c022 60%,#8be28b)"></div><div style="left:241.5px;top:524.0px;width:6px;height:15px;background:linear-gradient(#8be28b,#22c022 40%,#22c022 60%,#8be28b)"></div><div style="left:249.5px;top:524.0px;width:6px;height:15px;background:linear-gradient(#8be28b,#22c022 40%,#22c022 60%,#8be28b)"></div><div style="left:257.5px;top:524.0px;width:6px;height:15px;background:linear-gradient(#8be28b,#22c022 40%,#22c022 60%,#8be28b)"></div><div style="left:265.5px;top:524.0px;width:6px;height:15px;background:linear-gradient(#8be28b,#22c022 40%,#22c022 60%,#8be28b)"></div><div style="left:273.5px;top:524.0px;width:6px;height:15px;background:linear-gradient(#8be28b,#22c022 40%,#22c022 60%,#8be28b)"></div><div style="left:281.5px;top:524.0px;width:6px;height:15px;background:linear-gradient(#8be28b,#22c022 40%,#22c022 60%,#8be28b)"></div><div style="left:289.5px;top:524.0px;width:6px;height:15px;background:linear-gradient(#8be28b,#22c022 40%,#22c022 60%,#8be28b)"></div><div style="left:297.5px;top:524.0px;width:6px;height:15px;background:linear-gradient(#8be28b,#22c022 40%,#22c022 60%,#8be28b)"></div><div style="left:305.5px;top:524.0px;width:6px;height:15px;background:linear-gradient(#8be28b,#22c022 40%,#22c022 60%,#8be28b)"></div><div style="left:313.5px;top:524.0px;width:6px;height:15px;background:linear-gradient(#8be28b,#22c022 40%,#22c022 60%,#8be28b)"></div><div style="left:321.5px;top:524.0px;width:6px;height:15px;background:linear-gradient(#8be28b,#22c022 40%,#22c022 60%,#8be28b)"></div><div style="left:329.5px;top:524.0px;width:6px;height:15px;background:linear-gradient(#8be28b,#22c022 40%,#22c022 60%,#8be28b)"></div><div style="left:337.5px;top:524.0px;width:6px;height:15px;background:linear-gradient(#8be28b,#22c022 40%,#22c022 60%,#8be28b)"></div><div style="left:345.5px;top:524.0px;width:6px;height:15px;background:linear-gradient(#8be28b,#22c022 40%,#22c022 60%,#8be28b)"></div><div style="left:353.5px;top:524.0px;width:6px;height:15px;background:linear-gradient(#8be28b,#22c022 40%,#22c022 60%,#8be28b)"></div><div style="left:361.5px;top:524.0px;width:6px;height:15px;background:linear-gradient(#8be28b,#22c022 40%,#22c022 60%,#8be28b)"></div><div style="left:369.5px;top:524.0px;width:6px;height:15px;background:linear-gradient(#8be28b,#22c022 40%,#22c022 60%,#8be28b)"></div><div style="left:377.5px;top:524.0px;width:6px;height:15px;background:linear-gradient(#8be28b,#22c022 40%,#22c022 60%,#8be28b)"></div><div style="left:385.5px;top:524.0px;width:6px;height:15px;background:linear-gradient(#8be28b,#22c022 40%,#22c022 60%,#8be28b)"></div>
<div style="left:8px;top:730px;height:14px;line-height:14px;font-size:12px;color:#7d7b6e;letter-spacing:-1.253px">Frame:</div>
<div style="left:1188px;top:730px;height:14px;line-height:14px;font-size:12px;color:#6e6c60;letter-spacing:-0.637px">Time: 00:00:00.000</div>
<svg style="left:382.4px;top:725.6px" width="20" height="20" viewBox="0 0 16 16"><path d="M9.5 2.5 L5 6 H3 V10 H5 L9.5 13.5Z" fill="#b9b6a6" stroke="#adaa9a" stroke-width="1"/><path d="M11.5 4.5 Q13 8 11.5 11.5" stroke="#adaa9a" fill="none"/></svg>
<svg style="left:410.3px;top:725.6px" width="20" height="20" viewBox="0 0 16 16"><circle cx="8" cy="8" r="3.8" fill="#adaa9a"/><path d="M8 2.5V13.5M2.5 8H13.5M4.1 4.1L11.9 11.9M11.9 4.1L4.1 11.9" stroke="#adaa9a" stroke-width="2"/><circle cx="8" cy="8" r="1.5" fill="#ece9d8"/></svg>
<svg style="left:444.5px;top:725.6px" width="20" height="20" viewBox="0 0 16 16"><rect x="1" y="2" width="2.6" height="12" fill="#adaa9a"/><path d="M9.5 2 V14 L3.6 8Z M15.5 2 V14 L9.5 8Z" fill="#adaa9a"/></svg>
<svg style="left:470.9px;top:725.6px" width="20" height="20" viewBox="0 0 16 16"><rect x="2.5" y="2" width="2.4" height="12" fill="#adaa9a"/><path d="M13 2 V14 L5 8Z" fill="#cfccbc" stroke="#adaa9a" stroke-width="1"/></svg>
<svg style="left:496.8px;top:725.6px" width="20" height="20" viewBox="0 0 16 16"><path d="M8 2.5 V13.5 L1.5 8Z M15 2.5 V13.5 L8.5 8Z" fill="#adaa9a"/></svg>
<svg style="left:523.0px;top:725.6px" width="20" height="20" viewBox="0 0 16 16"><rect x="2.5" y="2" width="2.6" height="12" fill="#adaa9a"/><path d="M13.5 2 V14 L5.5 8Z" fill="#adaa9a"/></svg>
<svg style="left:549.1px;top:725.6px" width="20" height="20" viewBox="0 0 16 16"><circle cx="8" cy="8" r="6.8" fill="#adaa9a"/></svg>
<svg style="left:574.6px;top:725.6px" width="20" height="20" viewBox="0 0 16 16"><circle cx="8" cy="8" r="6.8" fill="#adaa9a"/></svg>
<svg style="left:600.4px;top:725.6px" width="20" height="20" viewBox="0 0 16 16"><rect x="2.5" y="1.5" width="4" height="13" fill="#adaa9a"/><rect x="9.5" y="1.5" width="4" height="13" fill="#adaa9a"/></svg>
<svg style="left:626.8px;top:725.6px" width="20" height="20" viewBox="0 0 16 16"><path d="M4.5 2 V14 L12.5 8Z" fill="#adaa9a"/></svg>
<svg style="left:652.3px;top:725.6px" width="20" height="20" viewBox="0 0 16 16"><rect x="2" y="2" width="12" height="12" fill="#adaa9a"/></svg>
<svg style="left:678.2px;top:725.6px" width="20" height="20" viewBox="0 0 16 16"><rect x="11" y="2" width="2.6" height="12" fill="#adaa9a"/><path d="M2.5 2 V14 L10.5 8Z" fill="#adaa9a"/></svg>
<svg style="left:703.7px;top:725.6px" width="20" height="20" viewBox="0 0 16 16"><path d="M1 2.5 V13.5 L7.5 8Z M8 2.5 V13.5 L14.5 8Z" fill="#adaa9a"/></svg>
<svg style="left:730.1px;top:725.6px" width="20" height="20" viewBox="0 0 16 16"><rect x="11" y="2" width="2.4" height="12" fill="#adaa9a"/><path d="M3 2 V14 L11 8Z" fill="#cfccbc" stroke="#adaa9a" stroke-width="1"/></svg>
<svg style="left:755.6px;top:725.6px" width="20" height="20" viewBox="0 0 16 16"><rect x="12.4" y="2" width="2.6" height="12" fill="#adaa9a"/><path d="M0.5 2 V14 L6.5 8Z M6.5 2 V14 L12.4 8Z" fill="#adaa9a"/></svg>
<svg style="left:791.1px;top:725.6px" width="20" height="20" viewBox="0 0 16 16"><circle cx="8" cy="8" r="5" fill="#adaa9a"/><path d="M8 1V15M1 8H15M3 3L13 13M13 3L3 13" stroke="#adaa9a" stroke-width="2.2"/></svg>
<svg style="left:816.6px;top:725.6px" width="20" height="20" viewBox="0 0 16 16"><path d="M6.5 2 Q0.5 8 6.5 14 Z" fill="#98958a"/><path d="M9.5 2 Q15.5 8 9.5 14 Z" fill="#98958a"/></svg>
<div style="left:437.1px;top:724px;width:1px;height:23px;background:#c5c2b2"></div><div style="left:438.1px;top:724px;width:1px;height:23px;background:#fff"></div>
<div style="left:783.0px;top:724px;width:1px;height:23px;background:#c5c2b2"></div><div style="left:784.0px;top:724px;width:1px;height:23px;background:#fff"></div>
<div style="left:0;top:749px;width:1280px;height:1px;background:#f8f7f0"></div>
<div style="left:3px;top:752.5px;width:1277px;height:15.5px;background:#ffff00"></div>
<div style="left:296px;top:752px;width:2px;height:16px;background:#8a8a40"></div>
<div style="left:311px;top:752px;width:2px;height:16px;background:#8a8a40"></div>
<div style="left:589px;top:752px;width:2px;height:16px;background:#8a8a40"></div>

<div style="left:80px;top:753px;height:14px;line-height:14px;font-size:12px;color:#5c5c1c;letter-spacing:-0.707px">EFILive FlashScan V2.5: USB</div>
<div style="left:316px;top:753px;height:14px;line-height:14px;font-size:12px;color:#5c5c1c;letter-spacing:-0.636px">[ GM ][ 1G1YY22G6Y5130521 ][ Manual ][ 12593359 ]</div>
<div style="left:594px;top:753px;height:14px;line-height:14px;font-size:12px;color:#5c5c1c;letter-spacing:-0.819px">Searching for OBDII modules...</div>
<div style="left:0;top:770px;width:1280px;height:30px;background:linear-gradient(#3168d5 0,#4993e6 2px,#2a62db 5px,#245edb 8px,#245edb 24px,#1e50c0 29px,#1941a5 30px)"></div>
<div style="left:0;top:770px;width:98px;height:30px;border-radius:0 9px 9px 0;background:linear-gradient(#388a38 0,#5ab55a 3px,#3f9a3f 7px,#3a953a 22px,#2f7f2f 30px);box-shadow:1px 0 2px #1c4aa0"></div>
<div style="left:36.5px;top:775px;height:20px;line-height:20px;font:italic bold 18px 'Liberation Sans',sans-serif;color:#fff;text-shadow:1px 1px 1px #2a5a2a;letter-spacing:-0.403px">start</div>
<svg style="left:13px;top:774.5px" width="21" height="21" viewBox="-1 0 18 18"><path d="M1 3 Q5 1 8 3 L7 8 Q4 6 0 8Z" fill="#e8542c"/><path d="M9.5 3.5 Q13 5.5 17 3.5 L16 8.5 Q12 10.5 8.5 8.5Z" fill="#7fc242"/><path d="M0 9.5 Q4 7.5 7 9.5 L6 14.5 Q3 12.5 -1 14.5Z" fill="#4a8ee8"/><path d="M8 10 Q12 12 15.5 10 L14.5 15 Q11 17 7 15Z" fill="#f8c832"/></svg>
<div style="left:1100px;top:770px;width:180px;height:30px;background:linear-gradient(#1688e0 0,#2aa4f4 2px,#139ee9 5px,#0f8eea 10px,#0f8eea 24px,#0c7ad0 30px)"></div>
<div style="left:1099px;top:770px;width:1px;height:30px;background:#0a4cb0"></div>
<div style="left:1224px;top:778px;height:14px;line-height:14px;font-size:12px;color:#fff;letter-spacing:-0.713px">10:07 AM</div>
<div style="left:109px;top:774px;width:156px;height:24px;border-radius:3px;background:linear-gradient(#66a4f8 0,#3f88f6 3px,#3c82f3 20px,#3174e4 25px);border:1px solid #2a5fcf"></div>
<div style="left:137px;top:779px;height:14px;line-height:14px;color:#fff;font-size:12px;font-weight:bold;letter-spacing:-0.900px">LS1 PCM: Car &amp; Truck...</div>
<div style="left:267px;top:774px;width:158.5px;height:24px;border-radius:3px;background:linear-gradient(#173f9a 0,#1b48a8 4px,#1d4eb2 20px,#2459c4 25px);border:1px solid #15368a"></div>
<div style="left:298px;top:779px;height:14px;line-height:14px;color:#fff;font-size:12px;font-weight:bold;letter-spacing:-0.866px">EFILive Scan V7.5</div>
<div style="left:432px;top:774px;width:156px;height:24px;border-radius:3px;background:linear-gradient(#66a4f8 0,#3f88f6 3px,#3c82f3 20px,#3174e4 25px);border:1px solid #2a5fcf"></div>
<div style="left:458px;top:779px;height:14px;line-height:14px;color:#fff;font-size:12px;font-weight:bold;letter-spacing:-0.701px">EFILive Tune V7.5 - L...</div>
<svg style="left:117.2px;top:778.0px" width="16" height="16" viewBox="0 0 16 16"><circle cx="8" cy="8" r="7" fill="#3a5fc0"/><circle cx="7.5" cy="7.5" r="3.4" fill="#4a6fd8"/><path d="M8 1 Q15.5 2 15 9 Q14 15.5 7.5 15 Q1 14 1.2 7 Q2 4 4 3 Q3.5 6 5.5 6.5 Q6 3.5 9.5 4 Q7.5 6 9 7.5 Q11.5 8 11 10.5 Q9 12.5 6 11 Q8 14 11.5 12.5 Q14.5 9.5 12.5 5.5 Q11 2.5 8 1Z" fill="#f28a1c"/><path d="M3 4 Q2 8 4 11 Q6 13.5 9 13" stroke="#e8541c" stroke-width="1.6" fill="none"/></svg>
<svg style="left:279.4px;top:778.0px" width="16" height="16" viewBox="0 0 16 16"><path d="M2 12 Q4 16 8 15 Q12 16 15 12 L12 11 L8 13 L4 11Z" fill="#10106c"/><circle cx="7" cy="6.5" r="5.3" fill="#b01818"/><path d="M4 3 Q8 0 11.5 3.5 Q13 7 10 10 Q7 7 4 3Z" fill="#101018"/></svg>
<svg style="left:442.6px;top:778.0px" width="16" height="16" viewBox="0 0 16 16"><path d="M2 12 Q4 16 8 15 Q12 16 15 12 L12 11 L8 13 L4 11Z" fill="#3030a0"/><path d="M3 9 Q2 3 8 2 Q13 2 12.5 8 Q10 10 7 9Z" fill="#c8b060"/><path d="M5 4 Q8 1 11 4 L9 8Z" fill="#d84828"/><circle cx="10" cy="9" r="2" fill="#48a8e8"/></svg>
<svg style="left:1048.7px;top:778.0px" width="16" height="16" viewBox="0 0 16 16"><rect x="1" y="1" width="13" height="14" fill="#f4f2e6" stroke="#8a8a7a"/><text x="4" y="12.5" font-family="Liberation Sans" font-weight="bold" font-size="12" fill="#3a3a3a">?</text></svg>
<svg style="left:1070.7px;top:778.0px" width="16" height="16" viewBox="0 0 16 16"><path d="M5 2 L10 1 L12 4 L7 6Z" fill="#e8eefc" stroke="#9ab0e0" stroke-width=".8"/><path d="M5 13 H10 L7.5 16Z" fill="#fff"/><path d="M6 8 H9" stroke="#dfe8fb" stroke-width="1.5"/></svg>
<div style="left:1090.5px;top:777px;width:18px;height:18px;border-radius:9px;background:radial-gradient(circle at 35% 35%,#8cc4fa,#2a7ae0 70%,#1a5ac8);border:1px solid #bcd8fa"></div>
<svg style="left:1091.5px;top:778.0px" width="16" height="16" viewBox="0 0 16 16"><path d="M9.5 4 L5.5 8 L9.5 12" stroke="#fff" stroke-width="2" fill="none"/></svg>
<svg style="left:1107.3px;top:778.0px" width="16" height="16" viewBox="0 0 16 16"><rect x="1" y="4" width="9" height="7" fill="#5a5a7a" stroke="#d8d8e8"/><rect x="6" y="1" width="8" height="7" fill="#3c5ca8" stroke="#c8d8f8"/><path d="M10 9 L14 14" stroke="#28c828" stroke-width="2"/></svg>
<svg style="left:1126.9px;top:778.0px" width="16" height="16" viewBox="0 0 16 16"><rect x="1" y="11" width="3" height="4" fill="#28c838"/><rect x="5" y="8" width="3" height="7" fill="#28c838"/><rect x="9" y="4.5" width="3" height="10.5" fill="#28c838"/><rect x="13" y="1" width="3" height="14" fill="#189828"/></svg>
<svg style="left:1147.0px;top:778.0px" width="16" height="16" viewBox="0 0 16 16"><rect x="1" y="2" width="14" height="10" fill="#8a8a8a" stroke="#c8b8a8"/><rect x="4" y="12" width="8" height="3" fill="#a89888"/></svg>
<svg style="left:1164.7px;top:778.0px" width="16" height="16" viewBox="0 0 16 16"><rect x="1" y="1" width="14" height="14" rx="2" fill="#e8f0e8" stroke="#38785a"/><path d="M4 5 H8 V3 L12 6 L8 9 V7 H4Z" fill="#188848"/><path d="M12 11 H8 V13 L4 10 L8 8 V9.5 H12Z" fill="#2858a8"/></svg>
<svg style="left:1182.7px;top:778.0px" width="16" height="16" viewBox="0 0 16 16"><rect x="5" y="1" width="6" height="14" rx="2" fill="#e8e8f0" stroke="#6a6a8a"/><rect x="5.5" y="8" width="5" height="6.5" fill="#c82828"/><circle cx="8" cy="4.5" r="1.8" fill="#2848c8"/></svg>
<svg style="left:1200.7px;top:778.0px" width="16" height="16" viewBox="0 0 16 16"><circle cx="8" cy="8" r="7" fill="#e8e8e8"/><path d="M8 1 A7 7 0 0 1 15 8 L8 8Z" fill="#e83828"/><path d="M15 8 A7 7 0 0 1 8 15 L8 8Z" fill="#38a838"/><path d="M8 15 A7 7 0 0 1 1 8 L8 8Z" fill="#f8c828"/><path d="M1 8 A7 7 0 0 1 8 1 L8 8Z" fill="#d84818"/><circle cx="8" cy="8" r="3" fill="#4888e8" stroke="#fff"/></svg>
</div></body></html>
